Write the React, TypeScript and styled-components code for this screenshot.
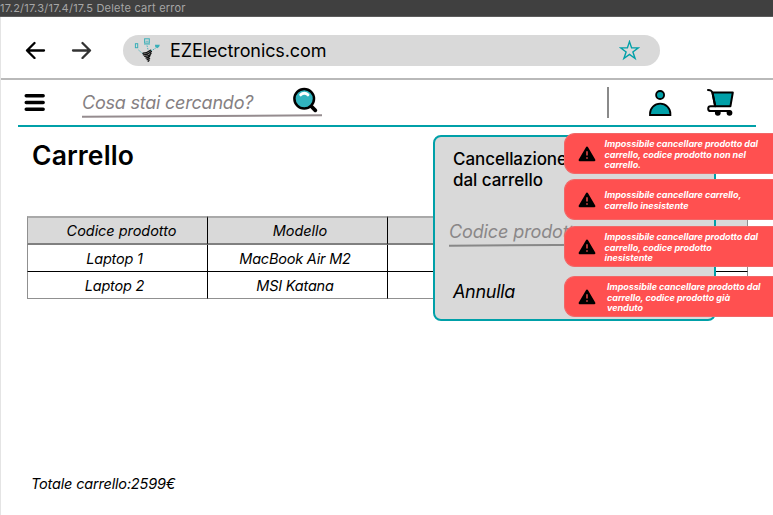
import React from "react";
import styled, { createGlobalStyle } from "styled-components";

const teal = "#00a0a8";

const GlobalStyle = createGlobalStyle`
  * { box-sizing: border-box; }
  body { margin: 0; overflow: hidden; background: #fff; }
`;

const Page = styled.div`
  position: relative;
  display: flex;
  flex-direction: column;
  width: 773px;
  height: 515px;
  overflow: hidden;
  background: #fff;
  color: #000;
  font-family: Inter, sans-serif;
`;

const FrameLabel = styled.div`
  flex: none;
  height: 17px;
  padding-top: 1px;
  background: #404040;
  border-bottom: 1px solid #5c5c5c;
  color: #a6a6a6;
  font-size: 11px;
  line-height: 15px;
  letter-spacing: 0.23px;
  white-space: nowrap;
`;

const Screen = styled.div`
  flex: 1;
  display: flex;
  flex-direction: column;
  border-left: 1px solid #e4e4e4;
`;

const BrowserBar = styled.div`
  display: flex;
  align-items: center;
  flex: none;
  height: 63px;
  padding: 5px 0 0 24px;
  border-bottom: 2px solid #b9b9b9;
`;

const BrowserArrow = styled.svg<{ $gap: number }>`
  flex: none;
  width: 21px;
  height: 18px;
  margin-right: ${(p) => p.$gap}px;
`;

const AddressBar = styled.div`
  display: flex;
  align-items: center;
  width: 537px;
  height: 31px;
  padding: 0 20px 0 10px;
  border-radius: 16px;
  background: #d9d9d9;
`;

const Address = styled.span`
  flex: 1;
  margin-left: 10px;
  font-size: 18px;
  line-height: 31px;
  letter-spacing: -0.1px;
`;

const ShopBar = styled.div`
  display: flex;
  align-items: center;
  flex: none;
  width: 738px;
  height: 47px;
  margin-left: 17px;
  padding: 0 21px 0 6px;
  border-bottom: 2px solid ${teal};
`;

const SearchField = styled.div`
  display: flex;
  flex-wrap: wrap;
  align-content: flex-start;
  justify-content: space-between;
  width: 242px;
  height: 32px;
  margin: 0 285px 0 36px;
  &::after {
    content: "";
    flex: 0 0 100%;
    height: 1.5px;
    background: #958c8f;
    transform: rotate(-0.3deg);
  }
`;

const Placeholder = styled.span`
  height: 28px;
  color: #858082;
  font-size: 18px;
  font-style: italic;
  line-height: 31px;
  letter-spacing: -0.22px;
  white-space: nowrap;
`;

const Divider = styled.div`
  width: 2px;
  height: 31px;
  margin-right: 39px;
  background: #8a8a8a;
`;

const Glyph = styled.svg<{ $gap?: number }>`
  display: block;
  flex: none;
  margin-right: ${(p) => p.$gap ?? 0}px;
`;

const Content = styled.main`
  flex: 1;
  display: flex;
  flex-direction: column;
  align-items: flex-start;
  padding: 12px 0 20px 26px;
`;

const Title = styled.h1`
  margin: 0 0 43px 5px;
  font-size: 26.5px;
  font-weight: 600;
  line-height: 33px;
  letter-spacing: 0.1px;
  padding-bottom: 1px;
`;

const CartTable = styled.table`
  width: 721px;
  border-collapse: separate;
  border-spacing: 0;
  table-layout: fixed;
`;

const HeaderCell = styled.th`
  height: 29px;
  padding: 1px 8px 0 13px;
  background: #d9d9d9;
  border-top: 2px solid #a9a9a9;
  border-right: 1px solid #000;
  border-bottom: 2px solid #808080;
  font-size: 14.5px;
  font-style: italic;
  font-weight: 400;
  line-height: 20px;
  letter-spacing: -0.05px;
  &:first-child { width: 181px; padding-left: 16px; border-left: 1px solid #909090; }
  &:last-child { border-right-color: #909090; }
`;

const Cell = styled.td`
  height: 27px;
  padding: 1px 8px 0 3px;
  border-right: 1px solid #000;
  border-bottom: 1px solid #000;
  font-size: 14.5px;
  font-style: italic;
  line-height: 20px;
  letter-spacing: -0.2px;
  text-align: center;
  tr:last-child > & { border-bottom-color: #909090; }
  &:first-child { padding-left: 2px; border-left: 1px solid #909090; }
  &:last-child { border-right-color: #909090; }
`;

const Total = styled.p`
  margin: auto 0 0 4px;
  font-size: 14.5px;
  font-style: italic;
  line-height: 22px;
  letter-spacing: -0.18px;
`;

const Dialog = styled.section`
  position: absolute;
  left: 433px;
  top: 135px;
  width: 283px;
  height: 186px;
  padding: 12px 14px;
  border: 2px solid ${teal};
  border-radius: 8px;
  background: #d9d9d9;
`;

const DialogTitle = styled.h2`
  margin: 0 0 27px 4px;
  font-size: 17px;
  font-weight: 500;
  line-height: 20.5px;
  letter-spacing: -0.05px;
`;

const CodeField = styled.div`
  height: 30px;
  color: #8a8788;
  font-size: 18px;
  font-style: italic;
  line-height: 30px;
  letter-spacing: -0.12px;
  &::after {
    content: "";
    display: block;
    height: 1.5px;
    margin-top: -3px;
    background: #888;
    transform: rotate(-0.3deg);
  }
`;

const CancelButton = styled.button`
  display: block;
  margin: 33px 0 0 4px;
  padding: 0;
  border: 0;
  background: none;
  color: #000;
  font: italic 18px/24px Inter, sans-serif;
  letter-spacing: -0.3px;
`;

const ToastStack = styled.div`
  position: absolute;
  left: 564px;
  top: 133px;
  width: 209px;
`;

const Toast = styled.div<{ $gap: number; $textInset: number }>`
  display: flex;
  align-items: center;
  height: 41px;
  margin-bottom: ${(p) => p.$gap}px;
  padding-left: 13px;
  border: 1px solid #f26767;
  border-right: 0;
  border-radius: 11px 0 0 11px;
  background: #ff5050;
  color: #fff;
  & > p { margin: 3px 0 0 ${(p) => p.$textInset}px; }
`;

const Message = styled.p`
  font-size: 9px;
  font-style: italic;
  font-weight: 700;
  line-height: 10.8px;
  letter-spacing: -0.03px;
  white-space: nowrap;
`;

const toasts = [
  { lines: ["Impossibile cancellare prodotto dal", "carrello, codice prodotto non nel", "carrello."], gap: 5, inset: 8.5 },
  { lines: ["Impossibile cancellare carrello,", "carrello inesistente"], gap: 6, inset: 8.5 },
  { lines: ["Impossibile cancellare prodotto dal", "carrello, codice prodotto", "inesistente"], gap: 9, inset: 8.5 },
  { lines: ["Impossibile cancellare prodotto dal", "carrello, codice prodotto già", "venduto"], gap: 0, inset: 11 },
];

const rows = [
  ["Laptop 1", "MacBook Air M2", "", ""],
  ["Laptop 2", "MSI Katana", "", ""],
];

const Tornado = () => (
  <Glyph width="27" height="25" viewBox="0 0 27 25" fill="none">
    <g stroke="#39afb8">
      <rect x="2.4" y="5.7" width="2.3" height="4" />
      <rect x="11.6" y=".8" width="4.7" height="4.3" />
      <path d="M12.5 3.3h3M11 6.2h6" strokeWidth=".7" />
      <path d="m5.5 12 4.5 4M14 7.5l1 4M23 9.5c-2 3-5 2-7 4.5" strokeDasharray="1.5 1" strokeWidth=".9" />
    </g>
    <path d="M22 6.8h4.8l-.7 2-1.7 1.4-2.2-1.4z" fill="#39afb8" />
    <path d="M10 15.2c2.5 0 5-1 7.5-3M10.4 16.8c3.3.2 5.8-1.3 8-3.3M11.8 18.4c2.5 0 5-1 6.2-3M13 20c2 0 3.5-1 4-2.7M14.2 21.7l2.4-1M15.2 23.2l.8-.7" stroke="#111" strokeWidth="1.35" strokeLinecap="round" />
  </Glyph>
);

const Warning = () => (
  <Glyph width="18" height="16" viewBox="0 0 18 16">
    <path d="M9 1.8 16.2 14H1.8Z" fill="#000" stroke="#000" strokeWidth="2.4" strokeLinejoin="round" />
    <path d="M9 5.2v4.2M9 11.2v1.5" stroke="#ff5050" strokeWidth="1.4" />
  </Glyph>
);

export default function App() {
  return (
    <Page>
      <GlobalStyle />
      <FrameLabel>17.2/17.3/17.4/17.5 Delete cart error</FrameLabel>
      <Screen>
        <BrowserBar>
          <BrowserArrow $gap={25} viewBox="0 0 21 18" fill="none" stroke="#000" strokeWidth="2.3" strokeLinecap="round" strokeLinejoin="round">
            <path d="M19 9.5H2m7.5-7.5L2 9.5 9.5 17" />
          </BrowserArrow>
          <BrowserArrow $gap={31} viewBox="0 0 21 18" fill="none" stroke="#333" strokeWidth="2.3" strokeLinecap="round" strokeLinejoin="round">
            <path d="M2 9.5h17M11.5 2 19 9.5 11.5 17" />
          </BrowserArrow>
          <AddressBar>
            <Tornado />
            <Address>EZElectronics.com</Address>
            <Glyph width="21" height="21" viewBox="0 0 21 21">
              <path d="m10.5 1.6 2.1 6.3h6.8l-5.5 4 2.2 6.6-5.6-4.1-5.6 4.1 2.2-6.6-5.5-4h6.8z" fill="none" stroke={teal} strokeWidth="1.4" />
            </Glyph>
          </AddressBar>
        </BrowserBar>
        <ShopBar>
          <Glyph width="22" height="18" viewBox="0 0 22 18">
            <path d="M2.2 1.7h17M2.2 8.5h17M2.2 15.2h17" stroke="#000" strokeWidth="3.4" strokeLinecap="round" />
          </Glyph>
          <SearchField>
            <Placeholder>Cosa stai cercando?</Placeholder>
            <Glyph $gap={3} width="27" height="27" viewBox="0 0 27 27">
              <path d="m19 19 4.3 4.3" stroke="#000" strokeWidth="3.8" strokeLinecap="round" />
              <circle cx="12.2" cy="11.8" r="9.8" fill="#31b4bf" stroke="#000" strokeWidth="2.5" />
              <path d="M8.7 7.8c2-2 5.2-2 7.2 0" fill="none" stroke="#fff" strokeWidth="3" strokeLinecap="round" />
            </Glyph>
          </SearchField>
          <Divider />
          <Glyph $gap={34} width="24" height="28" viewBox="0 0 24 28" fill={teal} stroke="#000" strokeWidth="1.8">
            <circle cx="12.1" cy="6" r="4" />
            <path d="M2 26v-1.2a10.2 10.2 0 0 1 20.4 0V26Z" />
          </Glyph>
          <Glyph width="29" height="29" viewBox="0 0 29 29" fill="none" stroke="#000" strokeWidth="2" strokeLinecap="round" strokeLinejoin="round">
            <path d="M6.5 4.5h20.3l-2.4 13.8H9.2z" fill={teal} />
            <path d="M2 2c3 .1 3.8.5 4.5 3.1l2.7 13.2H4.6a2.4 2.4 0 0 0 0 4.8h18.9" />
            <circle cx="11.8" cy="24.8" r="1.9" fill="#000" />
            <circle cx="23.5" cy="24.8" r="1.9" fill="#000" />
          </Glyph>
        </ShopBar>
        <Content>
          <Title>Carrello</Title>
          <CartTable>
            <thead>
              <tr>
                <HeaderCell>Codice prodotto</HeaderCell>
                <HeaderCell>Modello</HeaderCell>
                <HeaderCell />
                <HeaderCell />
              </tr>
            </thead>
            <tbody>
              {rows.map((row) => (
                <tr key={row[0]}>
                  {row.map((value, i) => <Cell key={i}>{value}</Cell>)}
                </tr>
              ))}
            </tbody>
          </CartTable>
          <Total>Totale carrello:2599€</Total>
        </Content>
      </Screen>
      <Dialog>
        <DialogTitle>Cancellazione<br />dal carrello</DialogTitle>
        <CodeField>Codice prodotto</CodeField>
        <CancelButton>Annulla</CancelButton>
      </Dialog>
      <ToastStack>
        {toasts.map((toast, i) => (
          <Toast key={i} $gap={toast.gap} $textInset={toast.inset}>
            <Warning />
            <Message>
              {toast.lines.map((line) => <React.Fragment key={line}>{line}<br /></React.Fragment>)}
            </Message>
          </Toast>
        ))}
      </ToastStack>
    </Page>
  );
}
